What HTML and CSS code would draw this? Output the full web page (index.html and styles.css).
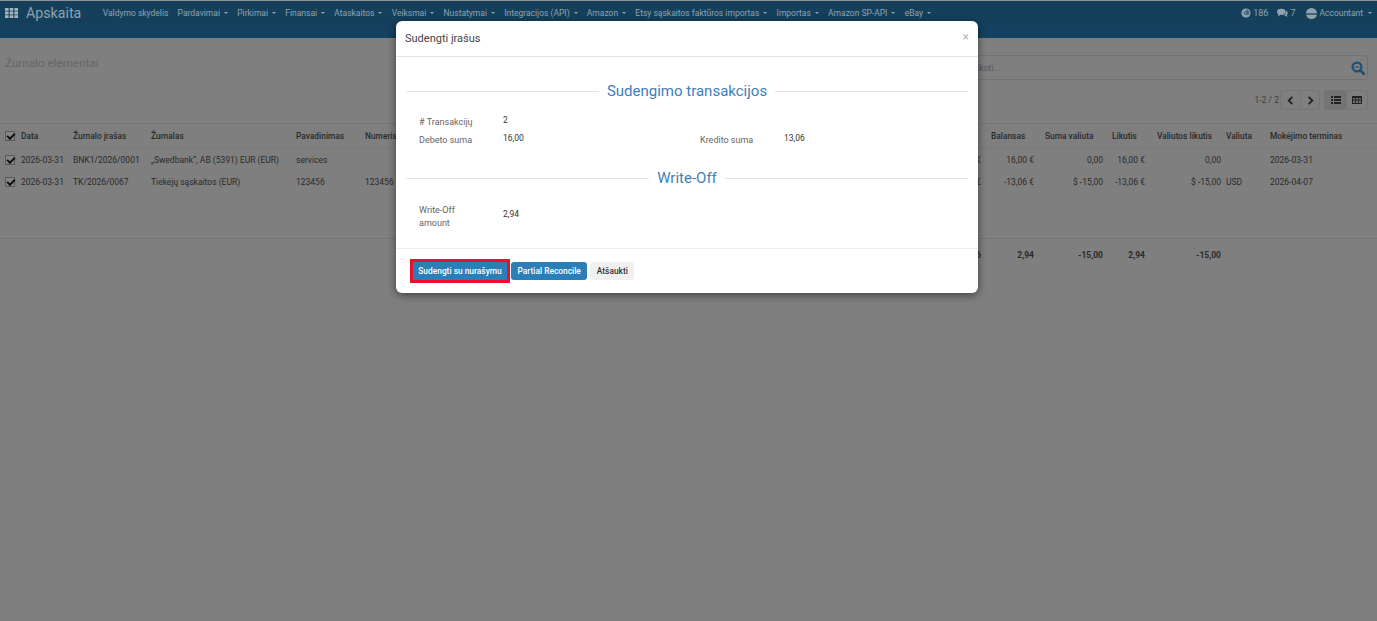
FILE: index.html
```html
<!DOCTYPE html>
<html lang="lt">
<head>
    <meta charset="UTF-8">
    <meta name="viewport" content="width=device-width, initial-scale=1.0">
    <title>Apskaita</title>
    <link rel="stylesheet" href="styles.css">
</head>
<body>

<header class="topbar">
    <div class="navbar">
        <svg class="apps-icon" viewBox="0 0 13 10"><path d="M0 0h3.600v2.800H0zM4.700 0h3.600v2.800H4.700zM9.400 0H13v2.800H9.400zM0 3.600h3.600v2.800H0zM4.700 3.600h3.600v2.800H4.700zM9.400 3.600H13v2.800H9.400zM0 7.200h3.600V10H0zM4.700 7.200h3.600V10H4.700zM9.400 7.200H13V10H9.400z"/></svg>
        <span class="brand">Apskaita</span>
        <nav class="menu">
            <a>Valdymo skydelis</a>
            <a class="drop">Pardavimai</a>
            <a class="drop">Pirkimai</a>
            <a class="drop">Finansai</a>
            <a class="drop">Ataskaitos</a>
            <a class="drop">Veiksmai</a>
            <a class="drop">Nustatymai</a>
            <a class="drop">Integracijos (API)</a>
            <a class="drop">Amazon</a>
            <a class="drop">Etsy sąskaitos faktūros importas</a>
            <a class="drop">Importas</a>
            <a class="drop">Amazon SP-API</a>
            <a class="drop">eBay</a>
        </nav>
        <div class="user-menu">
            <span class="user-item">
                <svg class="user-icon" viewBox="0 0 12 12"><circle cx="6" cy="6" r="5.500"/><circle cx="5.600" cy="6" r="1.800" fill="none" stroke="#14405c"/><path d="M7.500 4v3c0 1.200 1.800 1 2-.5 0-2.500-1.500-4-3.500-4" fill="none" stroke="#14405c"/></svg>
                186
            </span>
            <span class="user-item">
                <svg class="user-icon wide" viewBox="0 0 14 11"><ellipse cx="5.500" cy="4" rx="5.500" ry="4"/><path d="M2 6.500 1 10l4-2.500zM11.500 2.500C14 3.500 14.500 6.500 12.500 8l.7 2.500-3.200-1.800-2.500-.2c2 0 4.500-2 4-6z"/></svg>
                7
            </span>
            <span class="user-item drop account">
                <span class="avatar"></span>
                Accountant
            </span>
        </div>
    </div>
    <div class="subnav"></div>
</header>

<main class="page">
    <div class="control-panel">
        <h2 class="page-title">Žurnalo elementai</h2>
        <div class="controls">
            <div class="search-box">
                <span class="search-text">Ieškoti...</span>
                <svg class="search-icon" viewBox="0 0 14 14"><circle cx="6" cy="6" r="4.400" fill="none" stroke="#1a5178" stroke-width="2.200"/><path d="M3.800 6h4.400" stroke="#1a5178"/><path d="M9.300 9.300 13 13" stroke="#1a5178" stroke-width="2.600" stroke-linecap="round"/></svg>
            </div>
            <div class="pager-row">
                <span class="pager-count">1-2 / 2</span>
                <div class="btn-group">
                    <span class="tool-btn"><svg viewBox="0 0 8 10"><path d="M6 1 2 5l4 4" fill="none" stroke="#222" stroke-width="2"/></svg></span>
                    <span class="tool-btn"><svg viewBox="0 0 8 10"><path d="m2 1 4 4-4 4" fill="none" stroke="#222" stroke-width="2"/></svg></span>
                </div>
                <div class="btn-group views">
                    <span class="tool-btn active"><svg viewBox="0 0 10 8"><path d="M0 0h2v2H0zM3 0h7v2H3zM0 3h2v2H0zM3 3h7v2H3zM0 6h2v2H0zM3 6h7v2H3z" fill="#222"/></svg></span>
                    <span class="tool-btn"><svg viewBox="0 0 10 8"><path d="M0 0h10v8H0z" fill="#222"/><path d="M1 2h2.200v1.500H1zM4 2h2v1.500H4zM6.800 2H9v1.500H6.800zM1 4.500h2.200V7H1zM4 4.500h2V7H4zM6.800 4.500H9V7H6.800z" fill="#6f6f6f"/></svg></span>
                </div>
            </div>
        </div>
    </div>

    <table class="moves">
        <colgroup>
            <col class="c-check"><col class="c-date"><col class="c-move"><col class="c-journal"><col class="c-name"><col class="c-ref">
            <col class="c-credit"><col class="c-balance"><col class="c-amount"><col class="c-residual"><col class="c-curres"><col class="c-cur"><col class="c-due">
        </colgroup>
        <thead>
            <tr>
                <th><span class="check"></span></th>
                <th>Data</th><th>Žurnalo įrašas</th><th>Žurnalas</th><th>Pavadinimas</th><th>Numeris</th>
                <th></th><th>Balansas</th><th>Suma valiuta</th><th>Likutis</th><th>Valiutos likutis</th><th>Valiuta</th><th>Mokėjimo terminas</th>
            </tr>
        </thead>
        <tbody>
            <tr>
                <td><span class="check"></span></td>
                <td>2026-03-31</td><td>BNK1/2026/0001</td><td>„Swedbank“, AB (5391) EUR (EUR)</td><td>services</td><td></td>
                <td class="num">€</td><td class="num">16,00 €</td><td class="num">0,00</td><td class="num">16,00 €</td><td class="num">0,00</td><td></td><td>2026-03-31</td>
            </tr>
            <tr>
                <td><span class="check"></span></td>
                <td>2026-03-31</td><td>TK/2026/0067</td><td>Tiekėjų sąskaitos (EUR)</td><td>123456</td><td>123456</td>
                <td class="num">€</td><td class="num">-13,06 €</td><td class="num">$ -15,00</td><td class="num">-13,06 €</td><td class="num">$ -15,00</td><td>USD</td><td>2026-04-07</td>
            </tr>
            <tr class="filler"><td colspan="13"></td></tr>
        </tbody>
        <tfoot>
            <tr>
                <td colspan="6"></td>
                <td class="num">6</td><td class="num">2,94</td><td class="num">-15,00</td><td class="num">2,94</td><td class="num">-15,00</td><td></td><td></td>
            </tr>
        </tfoot>
    </table>
</main>

<div class="modal">
    <div class="modal-header">
        <h4 class="modal-title">Sudengti įrašus</h4>
        <span class="modal-close">×</span>
    </div>
    <div class="modal-body">
        <div class="separator first"><span>Sudengimo transakcijos</span></div>
        <div class="form-grid">
            <span class="label">#&nbsp;Transakcijų</span><span class="value">2</span><span></span><span></span>
            <span class="label">Debeto suma</span><span class="value">16,00</span><span class="label">Kredito suma</span><span class="value">13,06</span>
        </div>
        <div class="separator second"><span>Write-Off</span></div>
        <div class="form-grid writeoff">
            <span class="label">Write-Off<br>amount</span><span class="value">2,94</span>
        </div>
    </div>
    <div class="modal-footer">
        <span class="highlight"><button class="btn btn-primary">Sudengti su nurašymu</button></span>
        <button class="btn btn-primary">Partial Reconcile</button>
        <button class="btn btn-default">Atšaukti</button>
    </div>
</div>

</body>
</html>
```

FILE: styles.css
```css
* {
    box-sizing: border-box;
}
body {
    margin: 0;
    height: 621px;
    overflow: hidden;
    font-family: Roboto, "Liberation Sans", sans-serif;
    font-size: 8.5px;
    color: #222;
    background-color: #7f7f7f;
}

/* top bar */
.topbar {
    border-top: 1px solid #8d9296;
}
.navbar {
    display: flex;
    align-items: center;
    height: 24px;
    padding-left: 5px;
    background-color: #14405c;
    color: #8fa3b0;
}
.apps-icon {
    width: 13px;
    height: 10px;
    fill: #a5b5c0;
}
.brand {
    margin-left: 8px;
    font-size: 14.2px;
}
.menu {
    display: flex;
    margin-left: 21.5px;
    gap: 9.2px;
}
.drop::after {
    content: "";
    display: inline-block;
    margin-left: 4px;
    vertical-align: 2px;
    border-top: 2px solid currentColor;
    border-left: 2px solid transparent;
    border-right: 2px solid transparent;
}
.user-menu {
    display: flex;
    align-items: center;
    gap: 9px;
    margin-left: auto;
    padding-right: 5px;
}
.user-item {
    display: flex;
    align-items: center;
    gap: 2px;
    font-size: 9px;
}
.user-item.account {
    margin-left: 2px;
    font-size: 8.5px;
}
.user-icon {
    width: 10px;
    height: 10px;
    fill: #8fa3b0;
}
.user-icon.wide {
    width: 11px;
}
.avatar {
    width: 11px;
    height: 11px;
    border-radius: 50%;
    background: linear-gradient(#8fa3b0 45%, #45657a 45%, #45657a 60%, #8fa3b0 60%);
}
.account::after {
    margin-left: 3px;
}
.subnav {
    height: 13px;
    background-color: #14415f;
}

/* control panel */
.control-panel {
    display: flex;
    height: 85px;
    padding: 17px 9px 0 5px;
}
.page-title {
    margin: 0;
    padding-top: 1px;
    font-size: 11.7px;
    font-weight: 400;
    color: #666;
}
.controls {
    display: flex;
    flex-direction: column;
    margin-left: auto;
    width: 410px;
}
.search-box {
    display: flex;
    align-items: center;
    justify-content: space-between;
    height: 25px;
    padding: 0 2px 0 9px;
    border: 1px solid #727272;
    border-radius: 3px;
    color: #555;
}
.search-icon {
    width: 14px;
    height: 14px;
}
.pager-row {
    display: flex;
    align-items: center;
    justify-content: flex-end;
    margin-top: 10px;
}
.pager-count {
    margin-right: 1px;
    color: #3d3d3d;
}
.btn-group {
    display: flex;
    height: 20px;
    border: 1px solid #767676;
    border-radius: 2px;
}
.btn-group.views {
    margin-left: 4px;
}
.tool-btn {
    display: flex;
    align-items: center;
    justify-content: center;
    width: 19px;
}
.tool-btn + .tool-btn {
    border-left: 1px solid #767676;
}
.tool-btn svg {
    width: 9px;
    height: 9px;
}
.views .tool-btn {
    width: 21px;
}
.views .tool-btn svg {
    width: 10px;
    height: 8px;
}
.tool-btn.active {
    background-color: #747474;
    border-radius: 2px;
}

/* list */
.moves {
    width: 1377px;
    table-layout: fixed;
    border-collapse: collapse;
    color: #2a2a2a;
}
.c-check { width: 21px; }
.c-date { width: 52px; }
.c-move { width: 78px; }
.c-journal { width: 145px; }
.c-name { width: 69px; }
.c-ref { width: 570px; }
.c-credit { width: 56px; }
.c-balance { width: 54px; }
.c-amount { width: 67px; }
.c-residual { width: 45px; }
.c-curres { width: 69px; }
.c-cur { width: 44px; }
.moves th, .moves td {
    padding: 0;
    text-align: left;
    white-space: nowrap;
    overflow: hidden;
}
.moves thead tr {
    height: 25px;
    border-top: 1px solid #747474;
    border-bottom: 1px solid #787878;
}
.moves th {
    font-size: 8.4px;
    font-weight: 500;
}
.moves tbody tr {
    height: 22px;
}
.moves tbody tr.filler {
    height: 46px;
}
.moves tfoot tr {
    height: 32px;
    border-top: 1px solid #747474;
}
.moves tfoot td {
    font-weight: 700;
}
.moves td.num {
    text-align: right;
}
.moves td:nth-child(7).num { padding-right: 10px; }
.moves td:nth-child(8).num { padding-right: 11px; }
.moves td:nth-child(9).num { padding-right: 9px; }
.moves td:nth-child(10).num { padding-right: 12px; }
.moves td:nth-child(11).num { padding-right: 5px; }
.moves tfoot td:nth-child(2).num { padding-right: 10px; }
.moves tfoot td:nth-child(3).num { padding-right: 11px; }
.moves tfoot td:nth-child(4).num { padding-right: 9px; }
.moves tfoot td:nth-child(5).num { padding-right: 12px; }
.moves tfoot td:nth-child(6).num { padding-right: 5px; }
.check {
    display: block;
    position: relative;
    width: 10px;
    height: 10px;
    margin-left: 5px;
    border: 1px solid #5a5a5a;
    background-color: #868686;
}
.check::after {
    content: "";
    position: absolute;
    left: 1px;
    top: 1px;
    width: 6px;
    height: 3px;
    border-left: 2px solid #111;
    border-bottom: 2px solid #111;
    transform: rotate(-45deg);
}

/* dialog */
.modal {
    position: absolute;
    left: 396px;
    top: 21px;
    width: 582px;
    height: 272px;
    display: flex;
    flex-direction: column;
    background-color: #fff;
    border-radius: 6px;
    box-shadow: 0 2px 8px rgba(0, 0, 0, 0.5);
    color: #333;
}
.modal-header {
    display: flex;
    align-items: center;
    justify-content: space-between;
    height: 36px;
    padding: 0 9px;
    border-bottom: 1px solid #e5e5e5;
}
.modal-title {
    margin: 0;
    font-size: 11px;
    font-weight: 400;
    color: #444;
}
.modal-close {
    margin-bottom: 4px;
    font-size: 12px;
    color: #b5b5b5;
}
.modal-body {
    flex: 1;
    padding: 0 10px;
}
.separator {
    display: flex;
    align-items: center;
    gap: 8px;
    height: 18px;
    font-size: 15px;
    color: #4180b8;
}
.separator.first {
    margin-top: 25px;
}
.separator.second {
    margin-top: 22px;
}
.separator::before, .separator::after {
    content: "";
    flex: 1;
    height: 1px;
    background-color: #e5e5e5;
}
.form-grid {
    display: grid;
    grid-template-columns: 84px 197px 84px 1fr;
    row-gap: 5px;
    margin-top: 16px;
    padding-left: 13px;
    font-size: 9px;
    line-height: 13px;
}
.form-grid.writeoff {
    margin-top: 17px;
    grid-template-columns: 84px 1fr;
    align-items: center;
}
.label {
    color: #666;
}
.value {
    margin-top: -2px;
    font-size: 8.5px;
}
.writeoff .value {
    margin-top: -5px;
}
.modal-footer {
    display: flex;
    align-items: center;
    gap: 3px;
    height: 45px;
    padding-left: 14px;
    border-top: 1px solid #eee;
}
.btn {
    height: 18px;
    padding: 0 6.5px;
    border: none;
    border-radius: 3px;
    font-family: inherit;
    font-size: 8.4px;
    font-weight: 500;
}
.btn-primary {
    background-color: #2a7fb8;
    color: #fff;
}
.btn-default {
    background-color: #f0f0f0;
    color: #333;
}
.highlight {
    display: flex;
    margin-right: -2px;
    border: 3px solid #e8112d;
}
.highlight .btn {
    width: 94px;
    padding: 0;
    border-radius: 0;
}
```
